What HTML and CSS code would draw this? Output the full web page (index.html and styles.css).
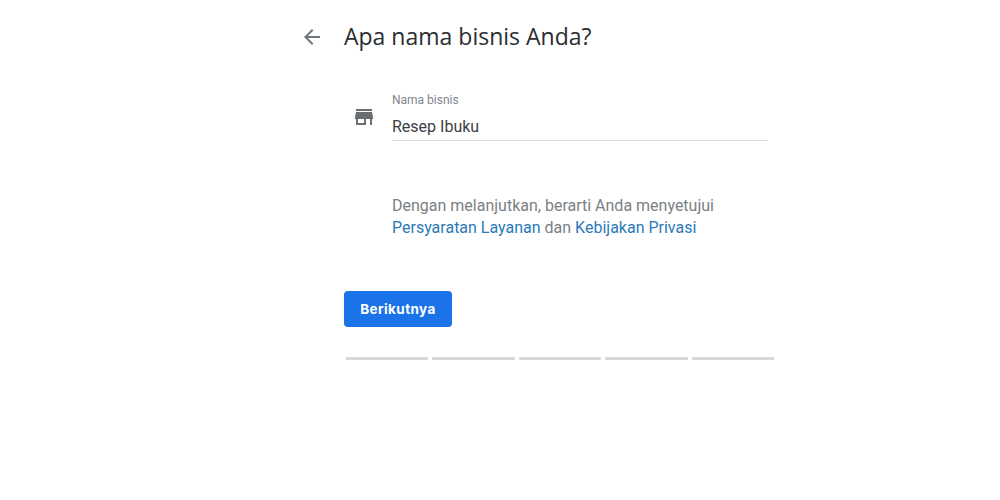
FILE: index.html
```html
<!DOCTYPE html>
<html lang="id">
<head>
<meta charset="utf-8">
<title>Apa nama bisnis Anda?</title>
<link rel="stylesheet" href="styles.css">
</head>
<body>
<main class="page">
  <header class="head">
    <svg class="back" width="24" height="24" viewBox="0 0 24 24"><path d="M20 11H7.83l5.59-5.59L12 4l-8 8 8 8 1.41-1.41L7.83 13H20v-2z"/></svg>
    <h1 class="title">Apa nama bisnis Anda?</h1>
  </header>
  <section class="field-row">
    <svg class="store" width="24" height="24" viewBox="0 0 24 24"><path d="M20 4H4v2h16V4zm1 10v-2l-1-5H4l-1 5v2h1v6h10v-6h4v6h2v-6h1zm-9 4H6v-4h6v4z"/></svg>
    <div class="field">
      <div class="label">Nama bisnis</div>
      <div class="value">Resep Ibuku</div>
    </div>
  </section>
  <p class="terms">Dengan melanjutkan, berarti Anda menyetujui<br><a href="#">Persyaratan Layanan</a> dan <a href="#">Kebijakan Privasi</a></p>
  <button class="next">Berikutnya</button>
  <div class="progress"><span></span><span></span><span></span><span></span><span></span></div>
</main>
</body>
</html>
```
FILE: styles.css
```css
* { box-sizing: border-box; }
html, body { margin: 0; height: 100%; background: #fff; overflow: hidden; }
body { font-family: Roboto, "Liberation Sans", sans-serif; }
.page { width: 480px; margin-left: 300px; padding-top: 21px; display: flex; flex-direction: column; align-items: flex-start; }
.head { display: flex; align-items: center; height: 32px; }
.back { fill: #70757a; margin-right: 20px; }
.title { margin: -2px 0 0; font-family: "Open Sans", Roboto, sans-serif; font-size: 23px; font-weight: 400; color: #2b2d30; line-height: 32px; }
.field-row { display: flex; align-items: center; margin: 39px 0 0 52px; }
.store { fill: #6a6e73; margin: 0 16px 0 0; }
.field { width: 376px; height: 49px; border-bottom: 1px solid #dadce0; }
.label { font-size: 12px; line-height: 16px; color: #80868b; }
.value { font-size: 16px; line-height: 24px; margin-top: 7px; color: #3c4043; }
.terms { margin: 54px 0 0 92px; font-size: 16px; line-height: 22px; color: #7a7f85; }
.terms a { color: #2a7ab8; text-decoration: none; }
.next { margin: 52px 0 0 44px; width: 108px; height: 36px; border: 0; border-radius: 4px; background: #1a73e8; color: #fff; font-family: Inter, Roboto, sans-serif; font-size: 13.5px; font-weight: 700; letter-spacing: 0.4px; padding: 0; }
.progress { display: flex; gap: 4px; margin: 30px 0 0 46px; }
.progress span { width: 82.4px; height: 3px; background: #d9d9d9; }
```
